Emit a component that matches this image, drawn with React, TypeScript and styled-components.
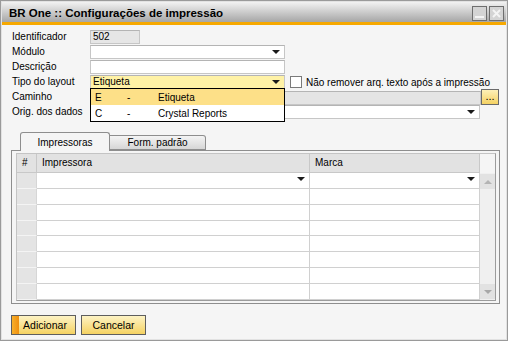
import styled, { createGlobalStyle } from 'styled-components';

const GlobalStyle = createGlobalStyle`
  body {
    margin: 0;
    background: #ffffff;
    font-family: 'Liberation Sans', Arial, sans-serif;
    font-size: 10px;
    color: #000;
  }
  * { box-sizing: border-box; }
`;

const Window = styled.div`
  position: relative;
  width: 508px;
  height: 341px;
  display: flex;
  flex-direction: column;
  background: #f5f5f5;
  border: 1px solid #9a9a9a;
  box-shadow: inset 0 0 0 1px #e2e2e2;
`;

const TitleBar = styled.div`
  height: 20px;
  margin: 1px 1px 0;
  display: flex;
  align-items: center;
  justify-content: space-between;
  padding: 0 2px 0 7px;
  background: linear-gradient(#f2f2f2, #a6a6a6);
`;

const Title = styled.span`
  font-weight: bold;
  font-size: 11.5px;
  padding-top: 2px;
`;

const WinButtons = styled.div`
  display: flex;
  gap: 2px;
  padding-top: 2px;
`;

const WinButton = styled.div`
  width: 15px;
  height: 15px;
  border: 1px solid #6e6e6e;
  background: #d4d4d4;
  display: flex;
  align-items: center;
  justify-content: center;
`;

const OrangeBar = styled.div`
  height: 3px;
  margin: 0 1px;
  background: #f6a800;
`;

const Body = styled.div`
  padding: 5px 0 0 10px;
  display: flex;
  flex-direction: column;
`;

const FormRow = styled.div`
  display: grid;
  grid-template-columns: 79px 1fr;
  height: 15px;
  align-items: start;
`;

const Label = styled.span`
  padding-left: 1px;
  line-height: 14px;
`;

const FieldCell = styled.div<{ $gap?: number }>`
  display: flex;
  align-items: center;
  gap: ${(p) => (p.$gap ?? 4)}px;
`;

const Field = styled.div<{ $w: number; $bg?: string }>`
  position: relative;
  width: ${(p) => p.$w}px;
  height: 14px;
  background: ${(p) => p.$bg || '#ffffff'};
  border: 1px solid #c6c6c6;
  border-top-color: #b4b4b4;
  padding-left: 2px;
  line-height: 12px;
`;

const Arrow = styled.span<{ $color?: string }>`
  position: absolute;
  right: 4px;
  top: 4px;
  width: 0;
  height: 0;
  border-left: 4px solid transparent;
  border-right: 4px solid transparent;
  border-top: 4px solid ${(p) => p.$color || '#1a1a1a'};
`;

const CheckBox = styled.span`
  width: 12px;
  height: 12px;
  border: 1px solid #7a7a7a;
  background: #ffffff;
  margin-left: 1px;
`;

const DotsButton = styled.div`
  width: 18px;
  height: 16px;
  margin-top: -1px;
  border: 1px solid #6a6a6a;
  background: linear-gradient(#fdf0b8, #f5d263);
  display: flex;
  align-items: center;
  justify-content: center;
  font-size: 11px;
  line-height: 8px;
  padding-bottom: 3px;
`;

const DropList = styled.div`
  position: absolute;
  left: 89px;
  top: 87px;
  width: 195px;
  border: 1px solid #000;
  background: #ffffff;
  z-index: 2;
`;

const DropItem = styled.div<{ $active?: boolean }>`
  display: grid;
  grid-template-columns: 32px 31px 1fr;
  height: 16px;
  align-items: center;
  padding-left: 4px;
  background: ${(p) => (p.$active ? '#fde088' : '#ffffff')};
`;

const TabStrip = styled.div`
  display: flex;
  align-items: flex-end;
  height: 18px;
  margin-top: 12px;
  padding-left: 9px;
`;

const Tab = styled.div<{ $active?: boolean }>`
  width: ${(p) => (p.$active ? 90 : 96)}px;
  height: ${(p) => (p.$active ? 19 : 15)}px;
  margin-bottom: ${(p) => (p.$active ? -1 : 0)}px;
  border: 1px solid #8e8e8e;
  border-bottom: ${(p) => (p.$active ? 'none' : '1px solid #8e8e8e')};
  border-left: ${(p) => (p.$active ? '1px solid #8e8e8e' : 'none')};
  border-radius: ${(p) => (p.$active ? '3px 3px 0 0' : '0 3px 0 0')};
  background: ${(p) => (p.$active ? '#f5f5f5' : 'linear-gradient(#f4f4f4, #d6d6d6)')};
  display: flex;
  align-items: center;
  justify-content: center;
  position: relative;
  z-index: 1;
`;

const TabPanel = styled.div`
  width: 489px;
  height: 154px;
  border: 1px solid #8e8e8e;
  padding: 2px 0 0 4px;
`;

const Grid = styled.div`
  width: 480px;
  height: 148px;
  display: flex;
  border: 1px solid #c4c4c4;
  border-right-color: #9c9c9c;
  border-bottom-color: #9c9c9c;
`;

const Table = styled.div`
  width: 463px;
  display: flex;
  flex-direction: column;
`;

const Row = styled.div`
  display: grid;
  grid-template-columns: 20px 273px 170px;
  height: 16px;
`;

const HeaderRow = styled(Row)`
  height: 19px;
  background: #e2e2e2;
`;

const HeadCell = styled.div`
  border-right: 1px solid #c8c8c8;
  border-bottom: 1px solid #c8c8c8;
  padding-left: 5px;
  line-height: 17px;
`;

const Cell = styled.div<{ $num?: boolean }>`
  position: relative;
  background: ${(p) => (p.$num ? '#e4e4e4' : '#ffffff')};
  border-right: 1px solid ${(p) => (p.$num ? '#d6d6d6' : '#d0d0d0')};
  border-bottom: 1px solid ${(p) => (p.$num ? '#f4f4f4' : '#d0d0d0')};
`;

const ScrollBar = styled.div`
  width: 15px;
  margin-top: 19px;
  background: #f0f0f0;
  display: flex;
  flex-direction: column;
  justify-content: space-between;
  padding: 1px 0;
`;

const ScrollButton = styled.div<{ $up?: boolean }>`
  height: 15px;
  background: #e2e2e2;
  display: flex;
  align-items: center;
  justify-content: center;
  &::after {
    content: '';
    border-left: 4px solid transparent;
    border-right: 4px solid transparent;
    ${(p) => (p.$up ? 'border-bottom: 4px solid #b4b4b4;' : 'border-top: 4px solid #a8a8a8;')}
  }
`;

const Footer = styled.div`
  display: flex;
  gap: 5px;
  margin-top: 11px;
`;

const Button = styled.div<{ $primary?: boolean }>`
  position: relative;
  width: 65px;
  height: 20px;
  border: 1px solid #5e5e5e;
  background: linear-gradient(#fdf3c4, #f5d262);
  display: flex;
  align-items: center;
  justify-content: center;
  font-size: 10.5px;
  padding-left: ${(p) => (p.$primary ? 3 : 0)}px;
  &::before {
    content: '';
    display: ${(p) => (p.$primary ? 'block' : 'none')};
    position: absolute;
    left: 0;
    top: 0;
    bottom: 0;
    width: 7px;
    background: linear-gradient(90deg, #f7b02a, #ef8f10);
  }
`;

const rows = [0, 1, 2, 3, 4, 5, 6, 7];

const App = () => {
  return (
    <>
      <GlobalStyle />
      <Window>
        <TitleBar>
          <Title>BR One :: Configurações de impressão</Title>
          <WinButtons>
            <WinButton>
              <svg width="11" height="11" viewBox="0 0 11 11">
                <rect x="1" y="8" width="9" height="2" fill="#f4f4f4" />
              </svg>
            </WinButton>
            <WinButton>
              <svg width="11" height="11" viewBox="0 0 11 11">
                <path d="M2 2 L9 9 M9 2 L2 9" stroke="#f4f4f4" strokeWidth="2" />
              </svg>
            </WinButton>
          </WinButtons>
        </TitleBar>
        <OrangeBar />
        <Body>
          <FormRow>
            <Label>Identificador</Label>
            <FieldCell>
              <Field $w={50} $bg="#e6e6e6">502</Field>
            </FieldCell>
          </FormRow>
          <FormRow>
            <Label>Módulo</Label>
            <FieldCell>
              <Field $w={195}>
                <Arrow />
              </Field>
            </FieldCell>
          </FormRow>
          <FormRow>
            <Label>Descrição</Label>
            <FieldCell>
              <Field $w={195} />
            </FieldCell>
          </FormRow>
          <FormRow>
            <Label>Tipo do layout</Label>
            <FieldCell>
              <Field $w={195} $bg="#fff2a6">
                Etiqueta
                <Arrow />
              </Field>
              <CheckBox />
              <span>Não remover arq. texto após a impressão</span>
            </FieldCell>
          </FormRow>
          <FormRow>
            <Label>Caminho</Label>
            <FieldCell $gap={0}>
              <Field $w={391} $bg="#e4e4e4" />
              <DotsButton>...</DotsButton>
            </FieldCell>
          </FormRow>
          <FormRow>
            <Label>Orig. dos dados</Label>
            <FieldCell>
              <Field $w={390}>
                <Arrow />
              </Field>
            </FieldCell>
          </FormRow>

          <TabStrip>
            <Tab $active>Impressoras</Tab>
            <Tab>Form. padrão</Tab>
          </TabStrip>
          <TabPanel>
            <Grid>
              <Table>
                <HeaderRow>
                  <HeadCell>#</HeadCell>
                  <HeadCell>Impressora</HeadCell>
                  <HeadCell>Marca</HeadCell>
                </HeaderRow>
                {rows.map((r) => (
                  <Row key={r}>
                    <Cell $num />
                    <Cell>{r === 0 && <Arrow />}</Cell>
                    <Cell>{r === 0 && <Arrow />}</Cell>
                  </Row>
                ))}
              </Table>
              <ScrollBar>
                <ScrollButton $up />
                <ScrollButton />
              </ScrollBar>
            </Grid>
          </TabPanel>
          <Footer>
            <Button $primary>Adicionar</Button>
            <Button>Cancelar</Button>
          </Footer>
        </Body>
        <DropList>
          <DropItem $active>
            <span>E</span>
            <span>-</span>
            <span>Etiqueta</span>
          </DropItem>
          <DropItem>
            <span>C</span>
            <span>-</span>
            <span>Crystal Reports</span>
          </DropItem>
        </DropList>
      </Window>
    </>
  );
};

export default App;
